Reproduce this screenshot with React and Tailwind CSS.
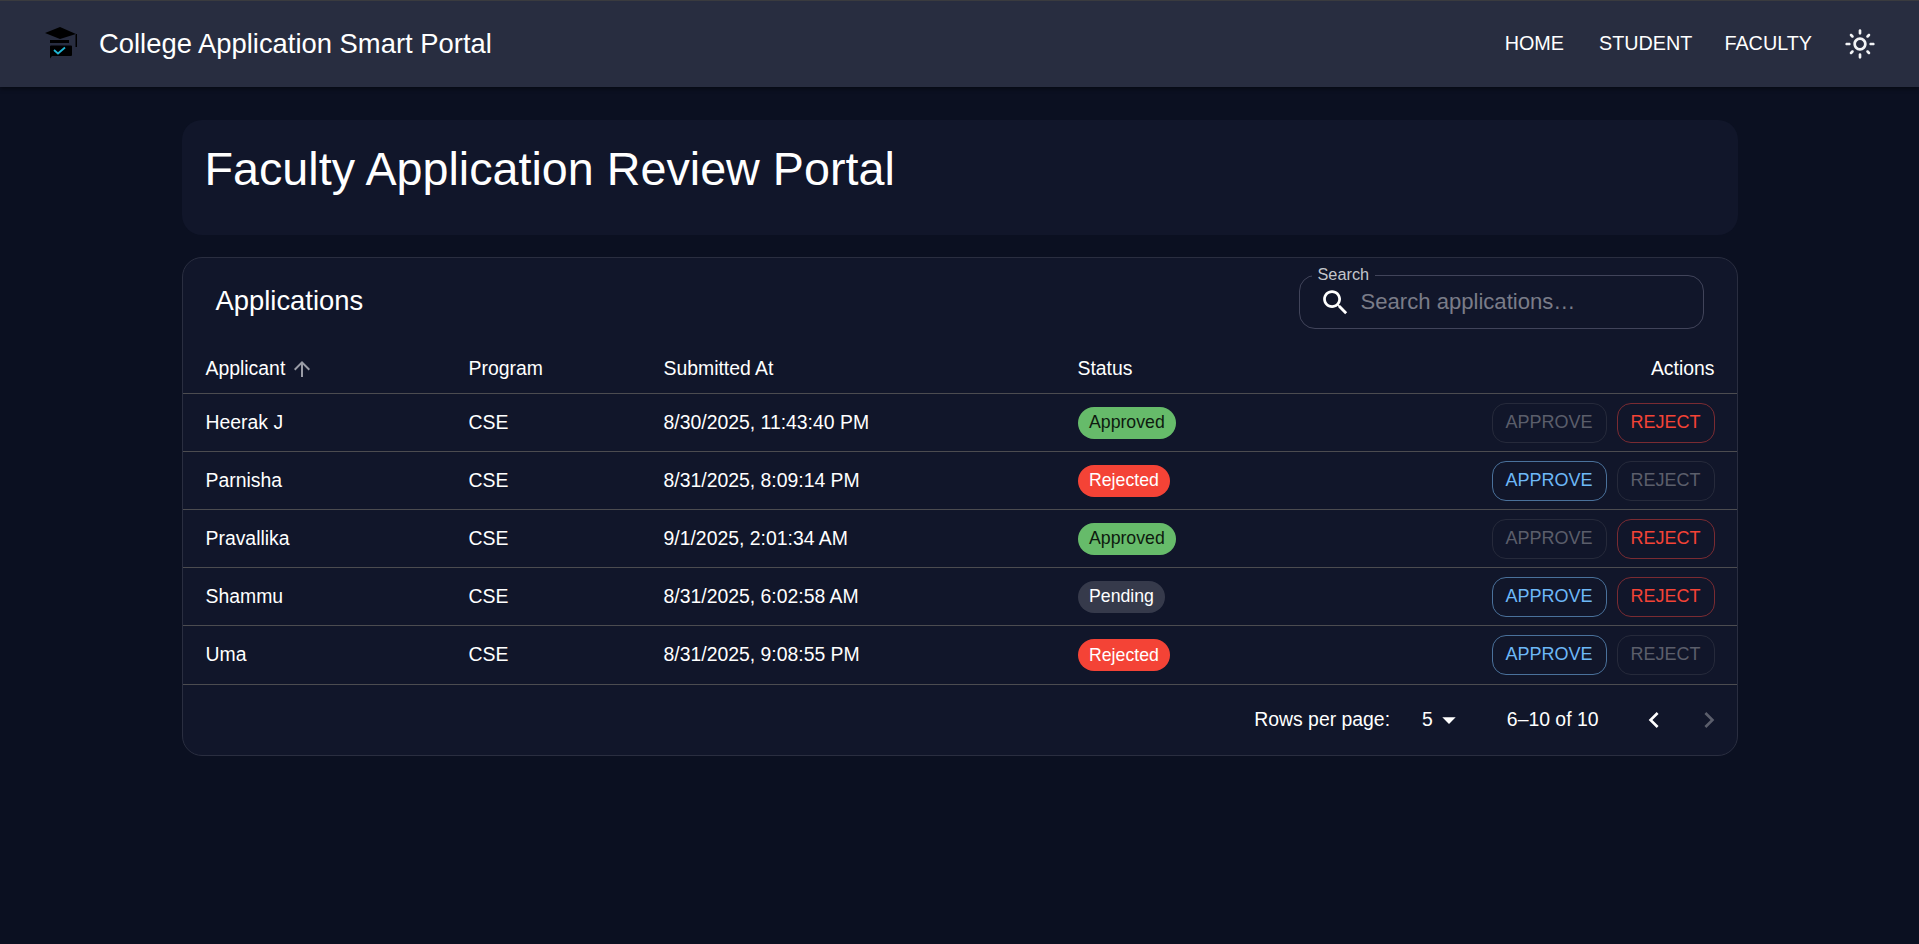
import React from 'react';

const aplicaciones = [
  { nombre: 'Heerak J', programa: 'CSE', fecha: '8/30/2025, 11:43:40 PM', estado: 'Approved' },
  { nombre: 'Parnisha', programa: 'CSE', fecha: '8/31/2025, 8:09:14 PM', estado: 'Rejected' },
  { nombre: 'Pravallika', programa: 'CSE', fecha: '9/1/2025, 2:01:34 AM', estado: 'Approved' },
  { nombre: 'Shammu', programa: 'CSE', fecha: '8/31/2025, 6:02:58 AM', estado: 'Pending' },
  { nombre: 'Uma', programa: 'CSE', fecha: '8/31/2025, 9:08:55 PM', estado: 'Rejected' },
];

const estilosChip = {
  Approved: 'bg-[#66bb6a] text-[#0e1a0f]',
  Rejected: 'bg-[#f44336] text-white',
  Pending: 'bg-[#363a4b] text-white',
};

const Logo = () => (
  <svg width="33" height="33" viewBox="0 0 33 33" className="shrink-0">
    <path d="M15 0 L0 6 L15 12 L31 7 Z" fill="#000" />
    <path d="M31 7 L32 7 V20 H30.5 V8 Z" fill="#000" />
    <rect x="5" y="13" width="19" height="3" fill="#000" />
    <path d="M6 18.5 H26 Q27 18.5 27 19.5 V28 Q27 29 26 29 H7 L5 31.5 V19.5 Q5 18.5 6 18.5 Z" fill="#000" />
    <path d="M9 23 L13 26.5 L20 20.5" fill="none" stroke="#1fb6d5" strokeWidth="1.8" />
  </svg>
);

const Icono = ({ d, tam = 24, className = '' }) => (
  <svg width={tam} height={tam} viewBox="0 0 24 24" fill="currentColor" className={className}>
    <path d={d} />
  </svg>
);

const SOL = 'M12 9c1.65 0 3 1.35 3 3s-1.35 3-3 3-3-1.35-3-3 1.35-3 3-3m0-2c-2.76 0-5 2.24-5 5s2.24 5 5 5 5-2.24 5-5-2.24-5-5-5zM2 13h2c.55 0 1-.45 1-1s-.45-1-1-1H2c-.55 0-1 .45-1 1s.45 1 1 1zm18 0h2c.55 0 1-.45 1-1s-.45-1-1-1h-2c-.55 0-1 .45-1 1s.45 1 1 1zM11 2v2c0 .55.45 1 1 1s1-.45 1-1V2c0-.55-.45-1-1-1s-1 .45-1 1zm0 18v2c0 .55.45 1 1 1s1-.45 1-1v-2c0-.55-.45-1-1-1s-1 .45-1 1zM5.99 4.58c-.39-.39-1.03-.39-1.41 0-.39.39-.39 1.03 0 1.41l1.06 1.06c.39.39 1.03.39 1.41 0s.39-1.03 0-1.41L5.99 4.58zm12.37 12.37c-.39-.39-1.03-.39-1.41 0-.39.39-.39 1.03 0 1.41l1.06 1.06c.39.39 1.03.39 1.41 0 .39-.39.39-1.03 0-1.41l-1.06-1.06zm1.06-10.96c.39-.39.39-1.03 0-1.41-.39-.39-1.03-.39-1.41 0l-1.06 1.06c-.39.39-.39 1.03 0 1.41s1.03.39 1.41 0l1.06-1.06zM7.05 18.36c.39-.39.39-1.03 0-1.41-.39-.39-1.03-.39-1.41 0l-1.06 1.06c-.39.39-.39 1.03 0 1.41s1.03.39 1.41 0l1.06-1.06z';
const LUPA = 'M15.5 14h-.79l-.28-.27C15.41 12.59 16 11.11 16 9.5 16 5.91 13.09 3 9.5 3S3 5.91 3 9.5 5.91 16 9.5 16c1.61 0 3.09-.59 4.23-1.57l.27.28v.79l5 4.99L20.49 19l-4.99-5zm-6 0C7.01 14 5 11.99 5 9.5S7.01 5 9.5 5 14 7.01 14 9.5 11.99 14 9.5 14z';
const FLECHA = 'M4 12l1.41 1.41L11 7.83V20h2V7.83l5.58 5.59L20 12l-8-8-8 8z';
const IZQ = 'M15.41 16.59 10.83 12l4.58-4.59L14 6l-6 6 6 6 1.41-1.41z';
const DER = 'M8.59 16.59 13.17 12 8.59 7.41 10 6l6 6-6 6-1.41-1.41z';
const ABAJO = 'M7 10l5 5 5-5z';

const BotonAprobar = ({ activo }) => (
  <button
    className={`h-10 w-[115px] rounded-[14px] border text-[18px] ${
      activo ? 'border-[#4a719b] text-[#6db8f7]' : 'border-[#262a3b] text-[#5b5e6b]'
    }`}
  >
    APPROVE
  </button>
);

const BotonRechazar = ({ activo }) => (
  <button
    className={`h-10 w-[98px] rounded-[14px] border text-[18px] ${
      activo ? 'border-[#7a2b32] text-[#f44336]' : 'border-[#262a3b] text-[#5b5e6b]'
    }`}
  >
    REJECT
  </button>
);

export default function App() {
  return (
    <div className="min-h-[944px] bg-[#0b1021] text-white font-['Liberation_Sans',Arial,sans-serif]">
      <header className="flex h-[87px] items-center justify-between border-t border-[#3a3b3f] bg-[#282d40] pl-[45px] pr-[43px] shadow-[0_2px_4px_rgba(0,0,0,0.4)]">
        <div className="flex items-center gap-[21px]">
          <Logo />
          <span className="text-[27.4px]">College Application Smart Portal</span>
        </div>
        <nav className="flex items-center text-[19.8px]">
          <span>HOME</span>
          <span className="ml-[35px]">STUDENT</span>
          <span className="ml-[32px]">FACULTY</span>
          <Icono d={SOL} tam={32} className="ml-[32px] text-[#f2f3f5]" />
        </nav>
      </header>

      <main className="mx-auto w-[1556px] pt-[33px]">
        <section className="flex h-[115px] rounded-[20px] bg-[#11162a] px-[23px] pt-[14px]">
          <h1 className="text-[46.7px] leading-[1.5]">Faculty Application Review Portal</h1>
        </section>

        <section className="mt-[22px] rounded-[20px] border border-[#2a2e40] bg-[#11162a]">
          <div className="flex h-[96px] flex-col">
            <div className="flex items-start justify-between pl-[33px] pr-[33px] pt-[17px]">
              <h2 className="mt-[8px] text-[27.4px] leading-[1.3]">Applications</h2>
              <div className="relative flex h-[54px] w-[405px] items-center rounded-[16px] border border-[#41445a] pl-[19px]">
                <span className="absolute left-[12px] top-[-11px] bg-[#11162a] px-[6px] text-[16.3px] leading-[18px] text-[#c3c5cc]">
                  Search
                </span>
                <Icono d={LUPA} tam={33} className="text-white" />
                <span className="ml-[9px] text-[22.1px] text-[#7a7c88]">Search applications…</span>
              </div>
            </div>
          </div>

          <table className="w-full table-fixed border-collapse text-[19.4px]">
            <colgroup>
              <col className="w-[286px]" />
              <col className="w-[195px]" />
              <col className="w-[414px]" />
              <col className="w-[300px]" />
              <col />
            </colgroup>
            <thead>
              <tr>
                <th className="pb-[10px] pl-[23px] text-left font-normal">
                  <span className="inline-flex items-center gap-[5px]">
                    Applicant
                    <Icono d={FLECHA} tam={24} className="text-[#9a9ca6]" />
                  </span>
                </th>
                <th className="pb-[10px] text-left font-normal">Program</th>
                <th className="pb-[10px] text-left font-normal">Submitted At</th>
                <th className="pb-[10px] text-left font-normal">Status</th>
                <th className="pb-[10px] pr-[22px] text-right font-normal">Actions</th>
              </tr>
            </thead>
            <tbody>
              {aplicaciones.map((a) => (
                <tr key={a.nombre} className="h-[58px] border-t border-[#4c4c50]">
                  <td className="pl-[23px]">{a.nombre}</td>
                  <td>{a.programa}</td>
                  <td>{a.fecha}</td>
                  <td>
                    <span className={`inline-flex h-8 items-center rounded-full px-[11.5px] text-[17.7px] ${estilosChip[a.estado]}`}>
                      {a.estado}
                    </span>
                  </td>
                  <td className="pr-[22px]">
                    <div className="flex justify-end gap-[10px]">
                      <BotonAprobar activo={a.estado !== 'Approved'} />
                      <BotonRechazar activo={a.estado !== 'Rejected'} />
                    </div>
                  </td>
                </tr>
              ))}
            </tbody>
          </table>

          <div className="flex h-[71px] items-center justify-end border-t border-[#4c4c50] pr-[12px] text-[19.4px]">
            <span>Rows per page:</span>
            <span className="ml-[32px]">5</span>
            <Icono d={ABAJO} tam={32} className="text-white" />
            <span className="ml-[42px]">6–10 of 10</span>
            <Icono d={IZQ} tam={32} className="ml-[39px] text-white" />
            <Icono d={DER} tam={32} className="ml-[23px] text-[#5b5e6b]" />
          </div>
        </section>
      </main>
    </div>
  );
}
